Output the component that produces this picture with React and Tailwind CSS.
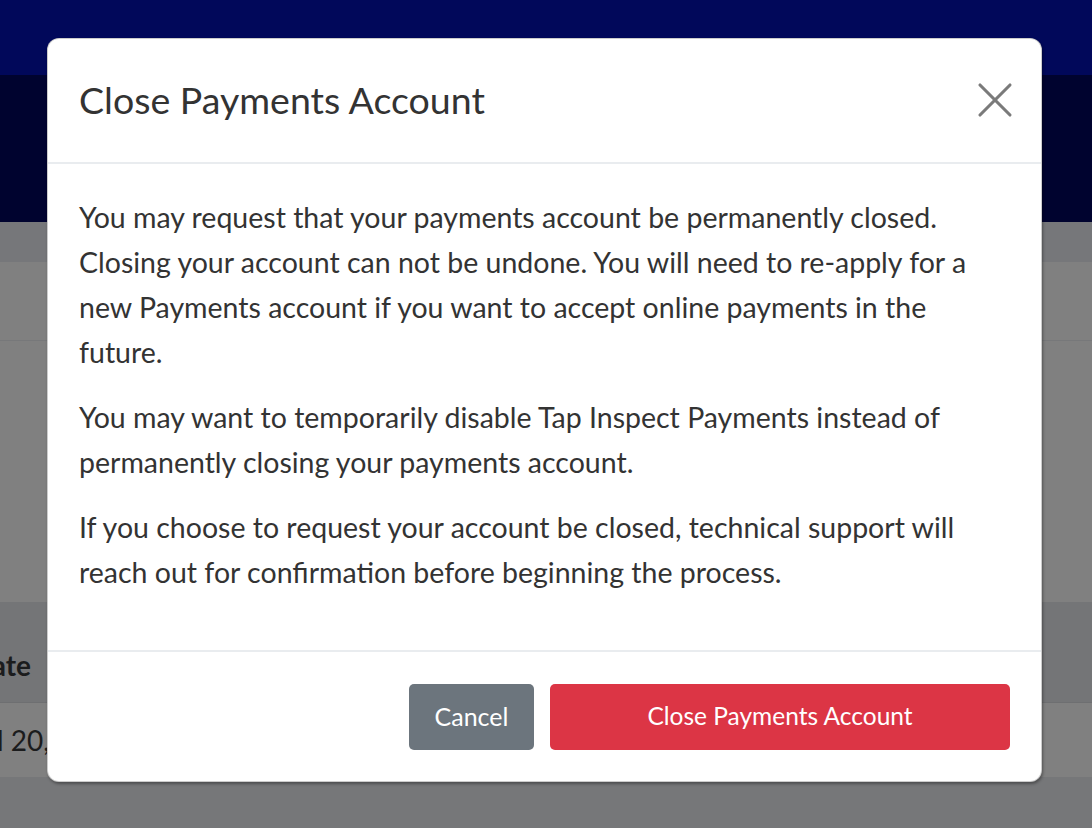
import { X } from "lucide-react";

const font = { fontFamily: "Lato, 'Noto Sans', sans-serif" };

function Backdrop() {
  return (
    <div className="flex flex-col w-full h-[828px] overflow-hidden" style={font}>
      <div className="h-[75px] bg-[#01085a]" />
      <div className="h-[147px] bg-[#00032f]" />
      <div className="h-[40px] bg-[#76777a]" />
      <div className="h-[79px] bg-[#808080] border-b border-[#77787a]" />
      <div className="h-[261px] bg-[#808080]" />
      <div className="h-[101px] bg-[#747577] border-b border-[#6e6f71] flex items-center pt-[26px]">
        <div className="w-[31px] overflow-hidden flex justify-end">
          <span className="whitespace-nowrap text-[28px] font-bold text-[#1b1c1d]">Date</span>
        </div>
      </div>
      <div className="h-[74px] bg-[#808080] flex items-center">
        <span className="whitespace-nowrap text-[28px] text-[#1b1c1d] -ml-[3px]">l 20, 2023</span>
      </div>
      <div className="flex-1 bg-[#767779]" />
    </div>
  );
}

function Modal() {
  return (
    <div
      className="absolute left-[47px] top-[38px] w-[995px] h-[744px] bg-white rounded-[12px] border border-black/20 shadow-[1px_2px_3px_rgba(0,0,0,0.35)] flex flex-col text-[#333333]"
      style={font}
    >
      <div className="h-[125px] shrink-0 flex items-center justify-between pl-[31px] pr-[16px] border-b-2 border-[#e9ecef]">
        <h5 className="text-[37.5px] leading-none pb-[2px]">Close Payments Account</h5>
        <button className="text-[#7a7a7a] -mt-[2px]">
          <X size={60} strokeWidth={1.25} />
        </button>
      </div>
      <div className="flex-1 px-[31px] pt-[31px] text-[28.5px] leading-[45px] whitespace-nowrap">
        <p className="mb-[20px]">
          You may request that your payments account be permanently closed.
          <br />
          Closing your account can not be undone. You will need to re-apply for a
          <br />
          new Payments account if you want to accept online payments in the
          <br />
          future.
        </p>
        <p className="mb-[20px]">
          You may want to temporarily disable Tap Inspect Payments instead of
          <br />
          permanently closing your payments account.
        </p>
        <p>
          If you choose to request your account be closed, technical support will
          <br />
          reach out for confirmation before beginning the process.
        </p>
      </div>
      <div className="h-[131px] shrink-0 border-t-2 border-[#e9ecef] flex items-center justify-end gap-[16px] pr-[31px]">
        <button className="w-[125px] h-[66px] rounded-[5px] bg-[#6c757d] text-white text-[25px]">
          Cancel
        </button>
        <button className="w-[460px] h-[66px] rounded-[5px] bg-[#dc3545] text-white text-[24.5px]">
          Close Payments Account
        </button>
      </div>
    </div>
  );
}

export default function App() {
  return (
    <div className="relative w-[1092px] h-[828px] overflow-hidden">
      <Backdrop />
      <Modal />
    </div>
  );
}
